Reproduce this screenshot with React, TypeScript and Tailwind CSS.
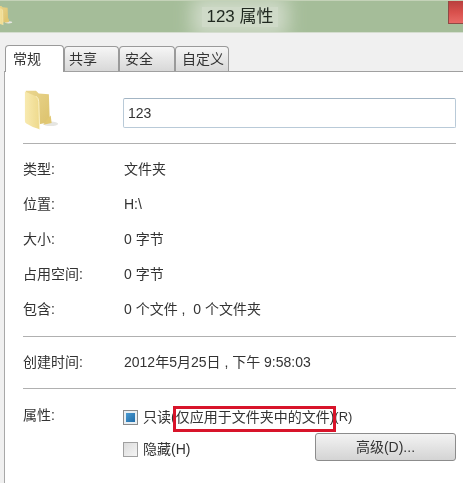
const font = "font-['Liberation_Sans','Noto_Sans_CJK_SC',sans-serif]";

function Folder({ className }: { className?: string }) {
  return (
    <svg viewBox="0 0 38 46" className={className}>
      <defs>
        <linearGradient id="back" x1="0" y1="0" x2="1" y2="1">
          <stop offset="0" stopColor="#ead690" />
          <stop offset="1" stopColor="#dcc26c" />
        </linearGradient>
        <linearGradient id="front" x1="0" y1="0" x2="1" y2="0">
          <stop offset="0" stopColor="#f8eab0" />
          <stop offset="1" stopColor="#eed98c" />
        </linearGradient>
      </defs>
      <ellipse cx="29" cy="38" rx="8" ry="2.5" fill="#e6e6e2" />
      <path d="M2 2 L13 2 L16 5 L27 6 L28 36 L14 39 L2 37 Z" fill="url(#back)" />
      <path d="M1 3 L13 8 Q16 10 16 14 L17 44 Q9 42 3 38 Q1 37 1 35 Z" fill="url(#front)" />
      <path d="M13 8 Q16 10 16 14 L17 44" fill="none" stroke="#fbf3cc" strokeWidth="1" />
      <path d="M26 32 L29 29 L30 37 L21 39 Z" fill="#e2c872" />
    </svg>
  );
}

function InfoRow({ label, value }: { label: string; value: string }) {
  return (
    <div className="flex h-[35px] items-center">
      <div className="w-[101px] shrink-0">{label}</div>
      <div>{value}</div>
    </div>
  );
}

function Tab({ label, className }: { label: string; className: string }) {
  return (
    <div className={`${className} flex h-[25px] items-center rounded-t-sm border border-b-0 border-[#9a9a9a] bg-gradient-to-b from-[#f6f6f6] to-[#d8d8d8] text-[14px]`}>
      {label}
    </div>
  );
}

export default function App() {
  return (
    <div className={`${font} relative h-[483px] w-[463px] overflow-hidden bg-[#f0f0f0] text-[14px] text-[#333333] blur-[0.4px]`}>
      {/* title bar */}
      <div className="relative flex h-[33px] items-center justify-center overflow-hidden border-t border-[#c4d2b8] border-b border-b-[#d5ddcf] bg-[#a5bd99] pl-[17px]">
        <Folder className="absolute left-[-6px] top-[4px] h-[21px] w-[20px]" />
        <div className="bg-[#cfdac8] px-1 text-[17px] leading-[20px] text-[#1f281f] shadow-[0_0_18px_10px_#cfdac8]">123 属性</div>
        <div className="absolute right-0 top-[-1px] h-[24px] w-[15px] border border-r-0 border-[#8f4a45] bg-gradient-to-b from-[#b8403e] via-[#d8504c] to-[#e86a66]" />
      </div>

      {/* tabs */}
      <div className="relative z-10 flex h-[38px] items-end pl-[5px]">
        <div className="z-10 mb-[-1px] flex h-[27px] w-[59px] items-center rounded-t-sm border border-b-0 border-[#9a9a9a] bg-white pl-[7px] text-[14px]">
          常规
        </div>
        <Tab label="共享" className="w-[55px] pl-[4px]" />
        <Tab label="安全" className="w-[56px] pl-[5px]" />
        <Tab label="自定义" className="w-[54px] pl-[6px]" />
      </div>

      {/* page */}
      <div className="ml-[4px] h-[412px] border-l border-t border-l-[#a8a8a8] border-t-[#a0a0a0] bg-white pl-[18px] pr-[7px]">
        <div className="flex h-[72px] items-start border-b border-[#b0b0b0]">
          <Folder className="ml-[1px] mt-[15px] h-[46px] w-[35px] shrink-0" />
          <div className="ml-[64px] mt-[26px] flex h-[30px] w-[335px] items-center rounded-[2px] border border-[#b9cad8] border-t-[#a3b5c4] pl-[4px]">
            123
          </div>
        </div>

        <div className="flex h-[193px] flex-col justify-center border-b border-[#b0b0b0] pb-[1px]">
          <InfoRow label="类型:" value="文件夹" />
          <InfoRow label="位置:" value="H:\" />
          <InfoRow label="大小:" value="0 字节" />
          <InfoRow label="占用空间:" value="0 字节" />
          <InfoRow label="包含:" value={"0 个文件 ,\u00a0 0 个文件夹"} />
        </div>

        <div className="flex h-[52px] items-center border-b border-[#b0b0b0]">
          <div className="w-[101px] shrink-0">创建时间:</div>
          <div>2012年5月25日 , 下午 9:58:03</div>
        </div>

        <div className="relative flex pt-[17px]">
          <div className="mt-[-2px] w-[100px] shrink-0 leading-[22px]">属性:</div>
          <div className="flex-1">
            <div className="flex h-[22px] items-center whitespace-nowrap">
              <span className="flex h-[15px] w-[15px] items-center justify-center border border-[#8a8a8a] bg-[#e8eef2]">
                <span className="h-[9px] w-[9px] bg-gradient-to-br from-[#4a9ad0] to-[#1f6ca8]" />
              </span>
              <span className="ml-[5px]">只读</span>
              <span>(仅应用于文件夹中的文件)</span>
              <span className="text-[13px]">(R)</span>
            </div>
            <div className="mt-[11px] flex items-start justify-between">
              <div className="flex h-[20px] items-center">
                <span className="h-[15px] w-[15px] border border-[#a0a0a0] bg-gradient-to-br from-[#dcdcdc] to-[#f5f5f5]" />
                <span className="ml-[5px]">隐藏(H)</span>
              </div>
              <div className="mt-[-6px] flex h-[28px] w-[141px] items-center justify-center rounded-[3px] border border-[#8c8c8c] bg-gradient-to-b from-[#f3f3f3] to-[#d4d4d4]">
                高级(D)...
              </div>
            </div>
          </div>
          {/* red highlight drawn over the screenshot */}
          <div className="absolute left-[150px] top-[17px] h-[26px] w-[163px] border-[3px] border-[#d8142a]" />
        </div>
      </div>
    </div>
  );
}
